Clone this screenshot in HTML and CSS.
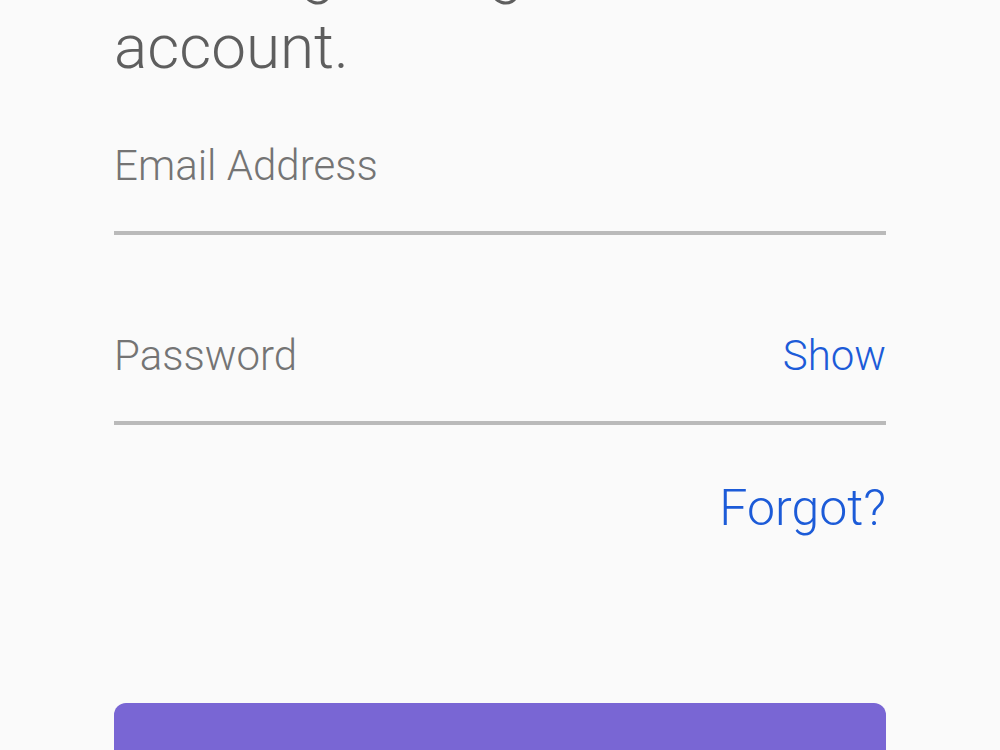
FILE: index.html
```html
<!DOCTYPE html>
<html lang="en">
<head>
  <meta charset="UTF-8">
  <meta name="viewport" content="width=device-width, initial-scale=1">
  <title>Sign In</title>
  <link rel="stylesheet" href="styles.css">
</head>
<body>

  <!-- Sign in screen -->
  <div class="screen">
    <h1 class="title">Hello again, sign in to the account.</h1>

    <form class="login-form" id="loginForm">
      <div class="field">
        <input type="email" id="email" name="email" placeholder="Email Address">
      </div>

      <div class="field field-password">
        <input type="password" id="password" name="password" placeholder="Password">
        <a href="#" class="show-link" id="togglePassword">Show</a>
      </div>

      <div class="forgot-row">
        <a href="#" class="forgot-link">Forgot?</a>
      </div>

      <button type="submit" class="submit-btn">Sign In</button>
    </form>
  </div>

</body>
</html>
```

FILE: styles.css
```css
html,
body {
  height: 100%;
  overflow: hidden;
}

body {
  margin: 0;
  padding: 0;
  background: #fafafa;
  font-family: Roboto, "Noto Sans", sans-serif;
  font-weight: 300;
}

.screen {
  padding: 0 114px;
}

.title {
  margin: -67px 0 0;
  font-size: 62px;
  line-height: 76px;
  font-weight: 300;
  color: #5e5e5e;
}

.login-form {
  display: flex;
  flex-direction: column;
}

.field {
  display: flex;
  align-items: center;
  border-bottom: 4px solid #bababa;
  margin-top: 56px;
}

.field-password {
  margin-top: 96px;
}

.field input {
  flex: 1;
  min-width: 0;
  border: none;
  outline: none;
  background: transparent;
  padding: 0 0 41px;
  height: 90px;
  box-sizing: border-box;
  font-family: inherit;
  font-weight: 300;
  font-size: 42px;
  color: #444;
}

.field input::placeholder {
  color: #747474;
}

.show-link {
  font-size: 42px;
  color: #1c5bd8;
  text-decoration: none;
  padding-bottom: 41px;
}

.forgot-row {
  margin-top: 54px;
  text-align: right;
}

.forgot-link {
  font-size: 50px;
  color: #1c5bd8;
  text-decoration: none;
}

.submit-btn {
  margin-top: 166px;
  height: 150px;
  border: none;
  border-radius: 12px;
  background: #7966d4;
  color: #fff;
  font-family: inherit;
  font-size: 44px;
  cursor: pointer;
}
```
